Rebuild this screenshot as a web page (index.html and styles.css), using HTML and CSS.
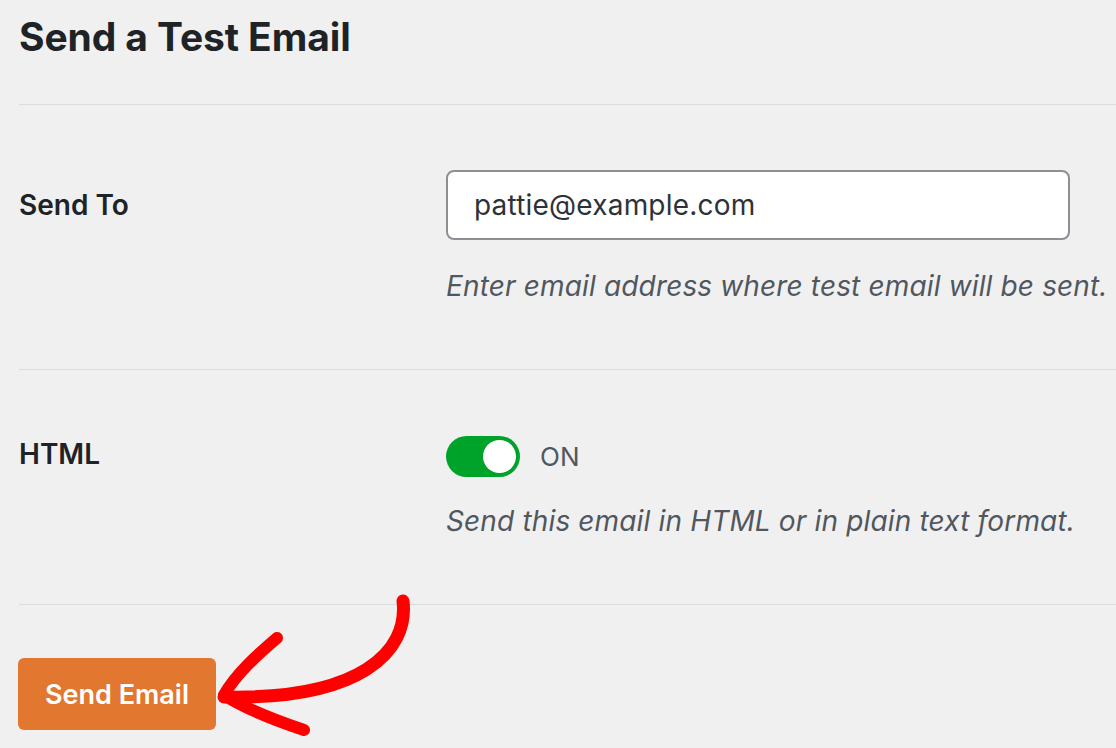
FILE: index.html
```html
<!DOCTYPE html>
<html lang="en">
<head>
    <meta charset="UTF-8" />
    <meta name="viewport" content="width=device-width, initial-scale=1.0" />
    <title>Send a Test Email</title>
    <link rel="stylesheet" href="styles.css">
</head>
<body>
    <div class="page">
        <h1>Send a Test Email</h1>

        <div class="form-row">
            <label class="row-label" for="send-to">Send To</label>
            <div class="row-field">
                <input type="email" id="send-to" value="pattie@example.com" />
                <p class="description">Enter email address where test email will be sent.</p>
            </div>
        </div>

        <div class="form-row html-row">
            <div class="row-label toggle-label">HTML</div>
            <div class="row-field">
                <div class="toggle-wrap">
                    <span class="toggle"><span class="knob"></span></span>
                    <span class="toggle-text">ON</span>
                </div>
                <p class="description">Send this email in HTML or in plain text format.</p>
            </div>
        </div>

        <div class="form-footer">
            <button type="button" class="send-btn">Send Email</button>
        </div>

        <!-- annotation arrow -->
        <svg class="arrow" width="1116" height="748" viewBox="0 0 1116 748">
            <g fill="none" stroke="#ff0000" stroke-linecap="round" stroke-linejoin="round">
                <path d="M403 601 C409 652 360 700 224 697" stroke-width="13" />
                <path d="M277 638 C256 656 236 674 224 695 C247 710 277 721 304 730" stroke-width="12" />
            </g>
        </svg>
    </div>
</body>
</html>
```

FILE: styles.css
```css
* {
    margin: 0;
    padding: 0;
    box-sizing: border-box;
}

body {
    background-color: #f0f0f1;
    color: #1d2327;
    font-family: Inter, "Liberation Sans", sans-serif;
    width: 1116px;
    height: 748px;
    overflow: hidden;
}

.page {
    position: relative;
    padding-left: 19px;
    height: 748px;
}

h1 {
    font-size: 39px;
    font-weight: 700;
    line-height: 48px;
    letter-spacing: -0.1px;
    padding-top: 13px;
    margin-bottom: 43px;
}

.form-row {
    display: grid;
    grid-template-columns: 427px 1fr;
    border-top: 1px solid #dcdcde;
    padding: 65px 0 65px 0;
}

.html-row {
    padding-top: 66px;
}

.row-label {
    font-size: 28px;
    font-weight: 600;
    line-height: 70px;
    color: #1d2327;
}

.toggle-label {
    line-height: 36px;
}

.row-field {
    min-width: 0;
}

input {
    display: block;
    width: 624px;
    height: 70px;
    padding: 0 26px;
    border: 2px solid #8c8f94;
    border-radius: 8px;
    background-color: #fff;
    color: #2c3338;
    font-family: Inter, "Liberation Sans", sans-serif;
    font-size: 28px;
    letter-spacing: 0.2px;
}

input:focus {
    outline: none;
}

.description {
    margin-top: 28px;
    font-size: 28px;
    line-height: 36px;
    font-style: italic;
    letter-spacing: 0.15px;
    color: #50575e;
    white-space: nowrap;
}

.html-row .description {
    margin-top: 26px;
}

.toggle-wrap {
    display: flex;
    align-items: center;
    gap: 20px;
    height: 41px;
}

.toggle {
    position: relative;
    width: 74px;
    height: 41px;
    border-radius: 21px;
    background-color: #00a32a;
}

.knob {
    position: absolute;
    top: 4px;
    right: 4px;
    width: 33px;
    height: 33px;
    border-radius: 50%;
    background-color: #fff;
}

.toggle-text {
    font-size: 26px;
    color: #50575e;
}

.form-footer {
    border-top: 1px solid #dcdcde;
    padding-top: 53px;
}

.send-btn {
    display: block;
    margin-left: -1px;
    width: 198px;
    height: 72px;
    border: none;
    border-radius: 6px;
    background-color: #e27730;
    color: #fff;
    font-family: Inter, "Liberation Sans", sans-serif;
    font-size: 27px;
    font-weight: 600;
}

.arrow {
    position: absolute;
    top: 0;
    left: 0;
    pointer-events: none;
}
```
